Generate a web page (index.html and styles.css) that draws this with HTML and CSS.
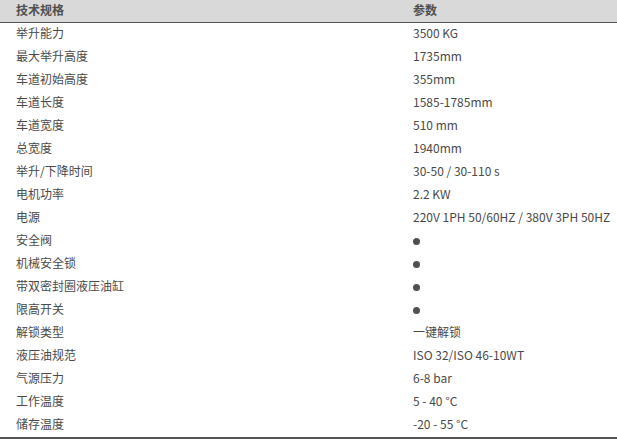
FILE: index.html
```html
<!DOCTYPE html>
<html lang="zh">
<head>
<meta charset="utf-8">
<link rel="stylesheet" href="styles.css">
</head>
<body>
<div class="spec">
  <div class="row head"><div class="cell">技术规格</div><div class="cell">参数</div></div>
  <div class="row"><div class="cell">举升能力</div><div class="cell">3500 KG</div></div>
  <div class="row"><div class="cell">最大举升高度</div><div class="cell">1735mm</div></div>
  <div class="row"><div class="cell">车道初始高度</div><div class="cell">355mm</div></div>
  <div class="row"><div class="cell">车道长度</div><div class="cell">1585-1785mm</div></div>
  <div class="row"><div class="cell">车道宽度</div><div class="cell">510 mm</div></div>
  <div class="row"><div class="cell">总宽度</div><div class="cell">1940mm</div></div>
  <div class="row"><div class="cell">举升/下降时间</div><div class="cell">30-50 / 30-110 s</div></div>
  <div class="row"><div class="cell">电机功率</div><div class="cell">2.2 KW</div></div>
  <div class="row"><div class="cell">电源</div><div class="cell">220V 1PH 50/60HZ / 380V 3PH 50HZ</div></div>
  <div class="row"><div class="cell">安全阀</div><div class="cell"><span class="dot"></span></div></div>
  <div class="row"><div class="cell">机械安全锁</div><div class="cell"><span class="dot"></span></div></div>
  <div class="row"><div class="cell">带双密封圈液压油缸</div><div class="cell"><span class="dot"></span></div></div>
  <div class="row"><div class="cell">限高开关</div><div class="cell"><span class="dot"></span></div></div>
  <div class="row"><div class="cell">解锁类型</div><div class="cell">一键解锁</div></div>
  <div class="row"><div class="cell">液压油规范</div><div class="cell">ISO 32/ISO 46-10WT</div></div>
  <div class="row"><div class="cell">气源压力</div><div class="cell">6-8 bar</div></div>
  <div class="row"><div class="cell">工作温度</div><div class="cell">5 - 40 °C</div></div>
  <div class="row"><div class="cell">储存温度</div><div class="cell">-20 - 55 °C</div></div>
</div>
</body>
</html>
```
FILE: styles.css
```css
html, body {
  margin: 0;
  padding: 0;
  background: #ffffff;
}
body {
  font-family: "Noto Sans CJK SC", "Noto Sans", sans-serif;
  font-size: 12px;
  color: #4a4a4a;
}
.spec {
  width: 617px;
  border-bottom: 2px solid #555555;
}
.row {
  display: grid;
  grid-template-columns: 397px 1fr;
  height: 23px;
  align-items: center;
}
.row.head {
  background: #d9d9d9;
  height: 22px;
  border-bottom: 1px solid #555555;
  font-weight: bold;
  color: #505050;
}
.cell {
  padding-left: 16px;
  padding-bottom: 4px;
  line-height: 16px;
  white-space: nowrap;
  display: flex;
  align-items: center;
}
.row.head .cell {
  padding-bottom: 2px;
}
.dot {
  display: inline-block;
  width: 7px;
  height: 7px;
  border-radius: 50%;
  background: #505050;
  margin-top: 4px;
}
```
